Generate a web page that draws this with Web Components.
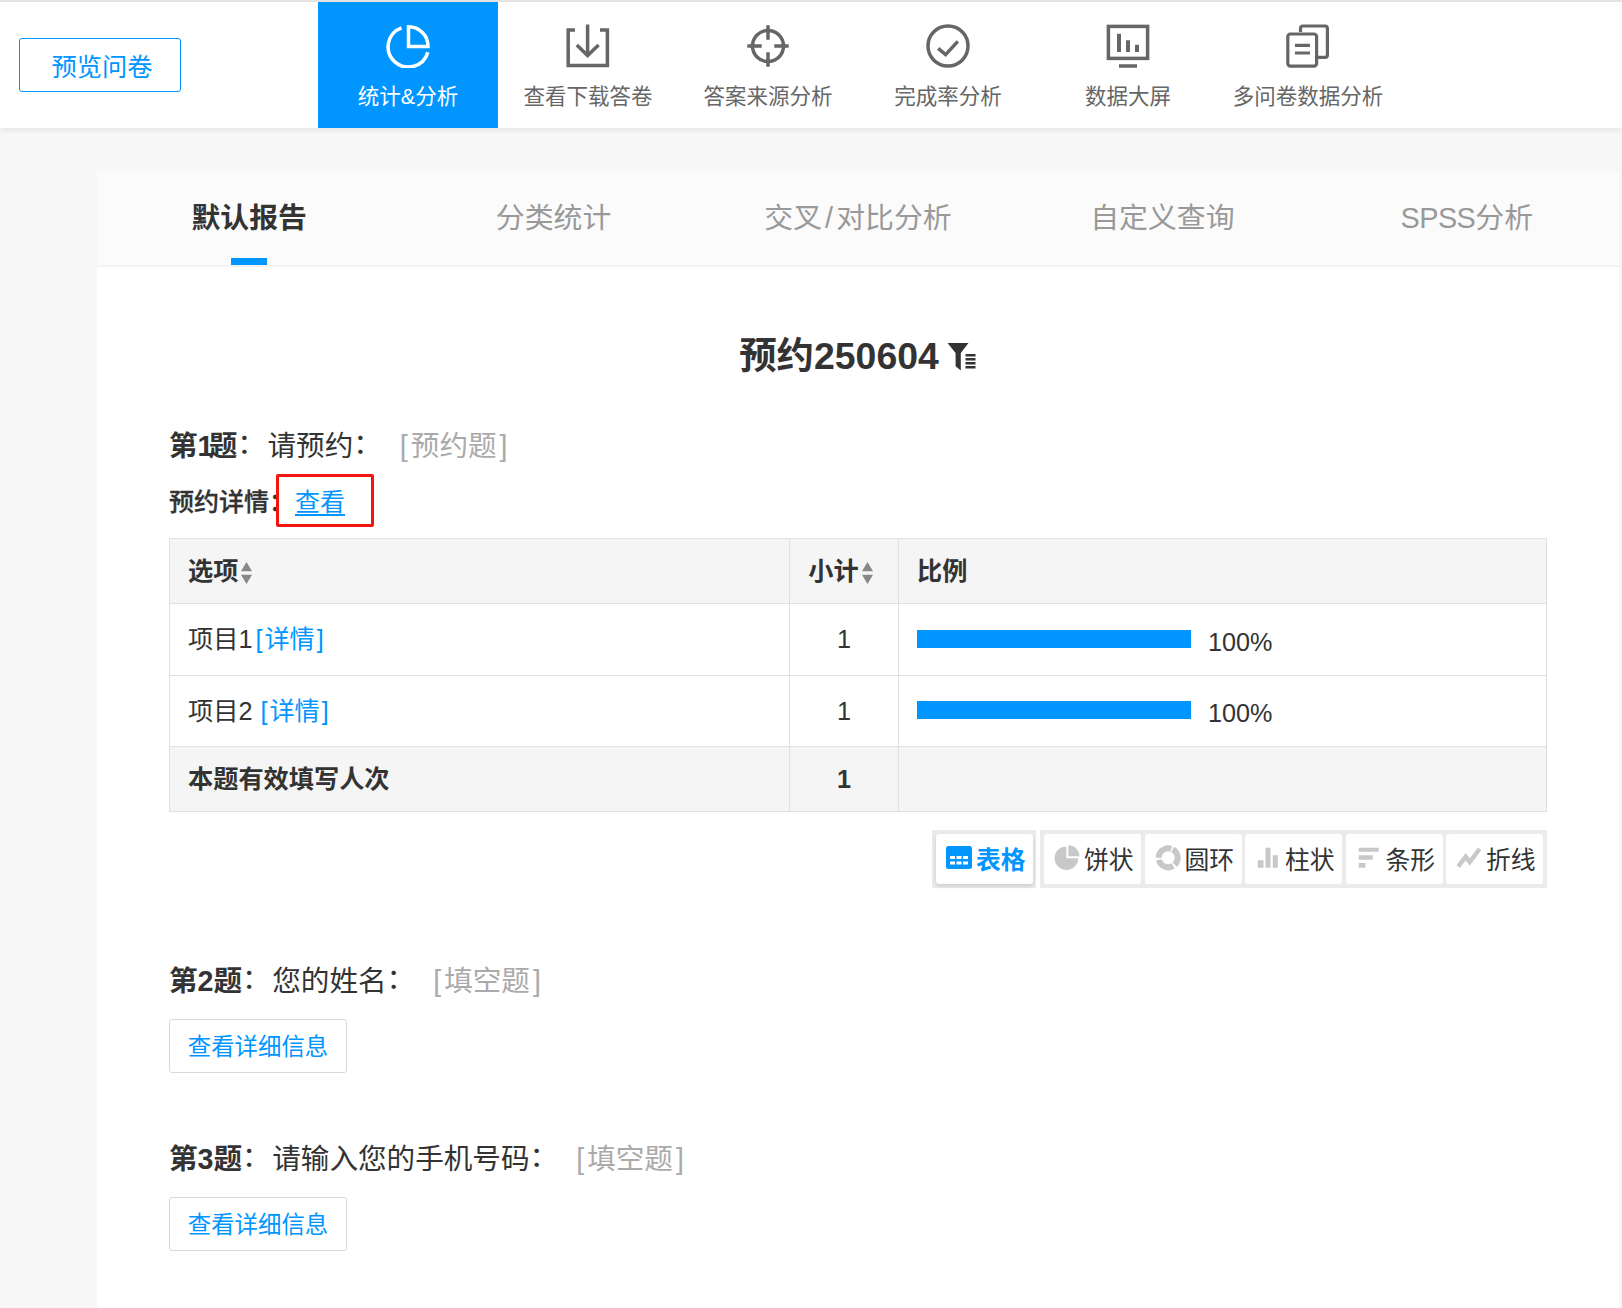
<!DOCTYPE html>
<html lang="zh-CN">
<head>
<meta charset="utf-8">
<title>预约250604</title>
<style>
html,body{margin:0;padding:0;height:1308px;overflow:hidden}
body{background:#f7f7f7;display:flex;flex-direction:column;color:#333;font-family:"Liberation Sans","Noto Sans CJK SC",sans-serif}
</style>
</head>
<body>
<report-header>
  <preview-button slot="action">预览问卷</preview-button>
  <nav-item icon="pie" active>统计&amp;分析</nav-item>
  <nav-item icon="download">查看下载答卷</nav-item>
  <nav-item icon="target">答案来源分析</nav-item>
  <nav-item icon="check">完成率分析</nav-item>
  <nav-item icon="screen">数据大屏</nav-item>
  <nav-item icon="docs">多问卷数据分析</nav-item>
</report-header>
<report-card>
  <tab-bar slot="tabs">
    <tab-item active>默认报告</tab-item>
    <tab-item>分类统计</tab-item>
    <tab-item>交叉<span style="padding:0 3px">/</span>对比分析</tab-item>
    <tab-item>自定义查询</tab-item>
    <tab-item><span style="letter-spacing:-.6px">SPSS</span>分析</tab-item>
  </tab-bar>
  <report-title>预约250604</report-title>
  <question-title num="第1题" tag="预约题" style="margin-top:43px">请预约</question-title>
  <detail-row label="预约详情" link="查看"></detail-row>
  <stats-table></stats-table>
  <chart-switch></chart-switch>
  <question-title num="第2题" tag="填空题" style="margin-top:73px">您的姓名</question-title>
  <detail-button style="margin-top:18px">查看详细信息</detail-button>
  <question-title num="第3题" tag="填空题" style="margin-top:66px">请输入您的手机号码</question-title>
  <detail-button style="margin-top:18px">查看详细信息</detail-button>
</report-card>

<script>
const BLUE = '#0095ff';
const ICONS = {
  pie:      {s:44, sw:3.5, body:'<path d="M15.5 3.8A20.2 20.2 0 1 0 41.8 28.2" fill="none"/><path d="M22.5 2.8V22.5H42A19.5 19.5 0 0 0 22.5 2.8Z" fill="none"/>'},
  download: {s:44, sw:3.5, body:'<path d="M9 6H2.2V41.6H41.4V6H34" fill="none"/><path d="M21.6 .5V31M10.8 21 21.6 31.5 32.6 21" fill="none"/>'},
  target:   {s:44, sw:3.5, body:'<circle cx="22" cy="22" r="15.5" fill="none"/><path d="M1.3 22H15.7M28.3 22H42.7M22 1.3V15.7M22 28.3V42.7" fill="none"/>'},
  check:    {s:44, sw:3.5, body:'<circle cx="22" cy="22" r="20" fill="none"/><path d="M12.2 24.4 19.6 30.6 31.8 17.4" fill="none"/>'},
  screen:   {s:44, sw:3.5, body:'<rect x="2.4" y="2.4" width="39.2" height="32" fill="none"/><path d="M13 9.7V28M22 16.3V28M31 20.7V28" fill="none" stroke-width="4"/><path d="M13 42H31" fill="none"/>'},
  docs:     {s:44, sw:3.2, body:'<path d="M14.5 8V4.4A2.4 2.4 0 0 1 16.9 2H39A2.4 2.4 0 0 1 41.4 4.4V31A2.4 2.4 0 0 1 39 33.4H32" fill="none"/><rect x="1.8" y="10" width="28.8" height="32.2" rx="2.6" fill="none"/><path d="M9 21.3H24M9 29H24" fill="none"/>'}
};

function define(name, css, html, init){
  customElements.define(name, class extends HTMLElement{
    constructor(){
      super();
      this.attachShadow({mode:'open'});
    }
    connectedCallback(){
      if(this.shadowRoot.childNodes.length) return;
      const body = typeof html === 'function' ? html(this) : html;
      this.shadowRoot.innerHTML = '<style>'+css+'</style>'+body;
      if(init) init(this);
    }
  });
}

define('line-icon',
  ':host{display:block;width:44px;height:44px;color:inherit}svg{display:block;width:100%;height:100%;stroke:currentColor;stroke-linejoin:miter}',
  el=>{const i=ICONS[el.getAttribute('name')];return `<svg viewBox="0 0 ${i.s} ${i.s}" stroke-width="${i.sw}">${i.body}</svg>`;});

define('report-header',
  `:host{display:flex;align-items:stretch;flex:none;height:126px;background:#fff;border-top:2px solid #e4e4e4;box-shadow:0 2px 6px rgba(0,0,0,.08);position:relative}
   .a{display:flex;align-items:center;padding-left:19px;width:318px;box-sizing:border-box}
   nav{display:flex}`,
  '<div class="a"><slot name="action"></slot></div><nav><slot></slot></nav>');

define('preview-button',
  `:host{display:flex;align-items:center;justify-content:center;width:162px;height:54px;box-sizing:border-box;padding:3px 0 0 4px;border:1px solid ${BLUE};border-radius:3px;color:${BLUE};font-size:25.3px;line-height:30px;background:#fff}`,
  '<slot></slot>');

define('nav-item',
  `:host{display:flex;flex-direction:column;align-items:center;width:180px;height:126px;padding-top:22px;box-sizing:border-box;color:#666;background:#fff}
   :host([active]){background:${BLUE};color:#fff}
   .t{margin-top:14px;font-size:21.5px;line-height:30px;white-space:nowrap}`,
  el=>`<line-icon name="${el.getAttribute('icon')}"></line-icon><div class="t"><slot></slot></div>`);

define('report-card',
  `:host{display:flex;flex-direction:column;flex:1;margin:43px 3px 0 97px;background:#fff;min-height:0}
   .c{display:flex;flex-direction:column;padding:0 72px}`,
  '<slot name="tabs"></slot><div class="c"><slot></slot></div>');

define('tab-bar',
  ':host{display:flex;flex:none;height:94px;background:#fbfbfb;border-bottom:2px solid #f2f2f2}',
  '<slot></slot>');

define('tab-item',
  `:host{display:flex;flex:1;align-items:center;justify-content:center;position:relative;font-size:28.9px;line-height:40px;color:#999;white-space:nowrap}
   :host([active]){color:#333;font-weight:700}
   :host([active])::after{content:"";position:absolute;left:50%;bottom:0;width:36px;height:7px;margin-left:-18px;background:${BLUE}}
   div{display:block}`,
  '<div><slot></slot></div>');

define('report-title',
  `:host{display:flex;justify-content:center;align-items:center;margin-top:56px;height:60px;font-size:37.4px;font-weight:700;color:#333}
   svg{display:block;width:30px;height:28px;margin-left:8px;margin-top:7px;fill:#333}`,
  '<slot></slot><svg viewBox="0 0 30 28"><path d="M.5 0H21.5L13.8 10V27.5L8.6 23.2V10Z"/><path d="M18.5 11H28.5V13.6H18.5ZM18.5 15H28.5V17.6H18.5ZM18.5 19H28.5V21.6H18.5ZM18.5 23H28.5V25.6H18.5Z"/></svg>');

define('question-title',
  `:host{display:block;height:40px;line-height:40px;font-size:28.6px;color:#333;white-space:nowrap}
   b{font-weight:700;margin-right:1.5px}
   b span{letter-spacing:-4.8px}
   i{font-style:normal;font-weight:400;line-height:0;vertical-align:.06em}
   .tag{margin-left:18px;color:#aaa}
   .tag span{padding:0 3px}`,
  el=>`<b>${el.getAttribute('num').replace('1','<span>1</span>')}<i>：</i></b><slot></slot><i>：</i><span class="tag">[<span>${el.getAttribute('tag')}</span>]</span>`);

define('detail-row',
  `:host{display:flex;align-items:center;margin-top:8px;height:53px;font-size:25px;color:#333;white-space:nowrap}
   .l{font-weight:500;-webkit-text-stroke:.3px #333;padding-bottom:2px}
   .box{display:flex;align-items:center;box-sizing:border-box;width:98px;height:53px;margin-left:-18px;padding:0 0 2px 16px;border:3px solid #f5150f;border-radius:2px}
   a{color:${BLUE};text-decoration:underline;text-underline-offset:3px}`,
  el=>`<span class="l">${el.getAttribute('label')}：</span><span class="box"><a>${el.getAttribute('link')}</a></span>`);

const sortIcon = '<svg class="sort" viewBox="0 0 10 20"><path d="M5 0 10 8.5H0ZM5 20 0 11.5H10Z" fill="#888"/></svg>';
define('stats-table',
  `:host{display:block;margin-top:11px;font-size:25.2px;color:#333}
   table{border-collapse:collapse;width:1378px;table-layout:fixed}
   td,th{border:1px solid #e0e0e0;padding:0 0 0 18px;font-weight:400;text-align:left;white-space:nowrap;line-height:32px}
   col.a{width:620px}col.b{width:109px}
   .h td,.f td{background:#f5f5f5;font-weight:700}
   .n{text-align:center;padding:0}
   .h .n{padding-right:7px}
   .up td{padding-bottom:2px}
   .bp{padding-bottom:2px}
   .sort{display:inline-block;width:11px;height:22px;margin-left:3px;vertical-align:-4px}
   .lnk{color:${BLUE};margin-left:8px}
   .lnk span{padding:0 2px}
   .one{letter-spacing:-5px}
   .bar{display:flex;align-items:center}
   .bar i{display:block;width:274px;height:18px;background:${BLUE}}
   .bar span{margin-left:17px;position:relative;top:3px}`,
  `<table><colgroup><col class="a"><col class="b"><col></colgroup>
   <tr class="h" style="height:65px"><td>选项${sortIcon}</td><td class="n">小计${sortIcon}</td><td>比例</td></tr>
   <tr class="up" style="height:72px"><td>项目<span class="one">1</span><span class="lnk">[<span>详情</span>]</span></td><td class="n">1</td><td><div class="bar"><i></i><span>100%</span></div></td></tr>
   <tr style="height:71px"><td>项目2<span class="lnk">[<span>详情</span>]</span></td><td class="n">1</td><td class="bp"><div class="bar"><i></i><span>100%</span></div></td></tr>
   <tr class="f" style="height:65px"><td>本题有效填写人次</td><td class="n">1</td><td></td></tr></table>`);

define('chart-switch',
  `:host{display:flex;justify-content:flex-end;gap:4px;margin-top:18px}
   .g{display:flex;gap:3.5px;padding:4px;background:#ebebeb}
   .g.one{padding-right:3px}`,
  `<div class="g one"><chart-button icon="table" active>表格</chart-button></div>
   <div class="g"><chart-button icon="pie">饼状</chart-button><chart-button icon="donut">圆环</chart-button><chart-button icon="bars">柱状</chart-button><chart-button icon="hbars">条形</chart-button><chart-button icon="line">折线</chart-button></div>`);

const CHART = {
  table:`<rect x="0" y="1" width="26" height="23" rx="2.5" fill="${BLUE}"/><path fill="#fff" d="M4 11h5v3H4ZM10.5 11h5v3h-5ZM17 11h5v3h-5ZM4 16.5h5v3H4ZM10.5 16.5h5v3h-5ZM17 16.5h5v3h-5Z"/>`,
  pie:`<path fill="#c8c8c8" d="M12.4 1.4V13.2H24.2A11.8 11.8 0 1 1 12.4 1.4Z"/><path fill="#c8c8c8" d="M14.4.3A11 11 0 0 1 25.4 11.3H14.4Z"/>`,
  donut:`<circle cx="13.2" cy="12.8" r="9.5" fill="none" stroke="#c8c8c8" stroke-width="6" stroke-dasharray="17.9 2" transform="rotate(-62 13.2 12.8)"/>`,
  bars:`<path fill="#c8c8c8" d="M2.8 15.3H8.5V22.7H2.8ZM10.5 2.7H15.5V22.7H10.5ZM17.8 10.3H22.8V22.7H17.8Z"/>`,
  hbars:`<path fill="#c8c8c8" d="M2.8 2.7H22.8V6.7H2.8ZM2.8 10.3H16.8V14.7H2.8ZM2.8 18H9.5V22.7H2.8Z"/>`,
  line:`<path fill="none" stroke="#c8c8c8" stroke-width="4.4" d="M2.3 21.5 9.7 11.6 13.7 17 23.7 3.7"/>`
};
define('chart-button',
  `:host{display:flex;align-items:center;gap:4px;box-sizing:border-box;width:97px;height:50px;padding:0 0 2px 10px;background:#fff;border-radius:3px;font-size:24.8px;color:#333;white-space:nowrap}
   :host([active]){color:${BLUE};font-weight:700;box-shadow:0 2px 4px rgba(0,0,0,.14)}
   svg{display:block;width:26px;height:26px;flex:none}`,
  el=>`<svg viewBox="0 0 26 26">${CHART[el.getAttribute('icon')]}</svg><slot></slot>`);

define('detail-button',
  `:host{display:flex;align-items:center;justify-content:center;box-sizing:border-box;width:178px;height:54px;padding-bottom:2px;background:#fff;border:1px solid #d9d9d9;border-radius:3px;color:${BLUE};font-size:23.4px;white-space:nowrap}`,
  '<slot></slot>');
</script>
</body>
</html>
